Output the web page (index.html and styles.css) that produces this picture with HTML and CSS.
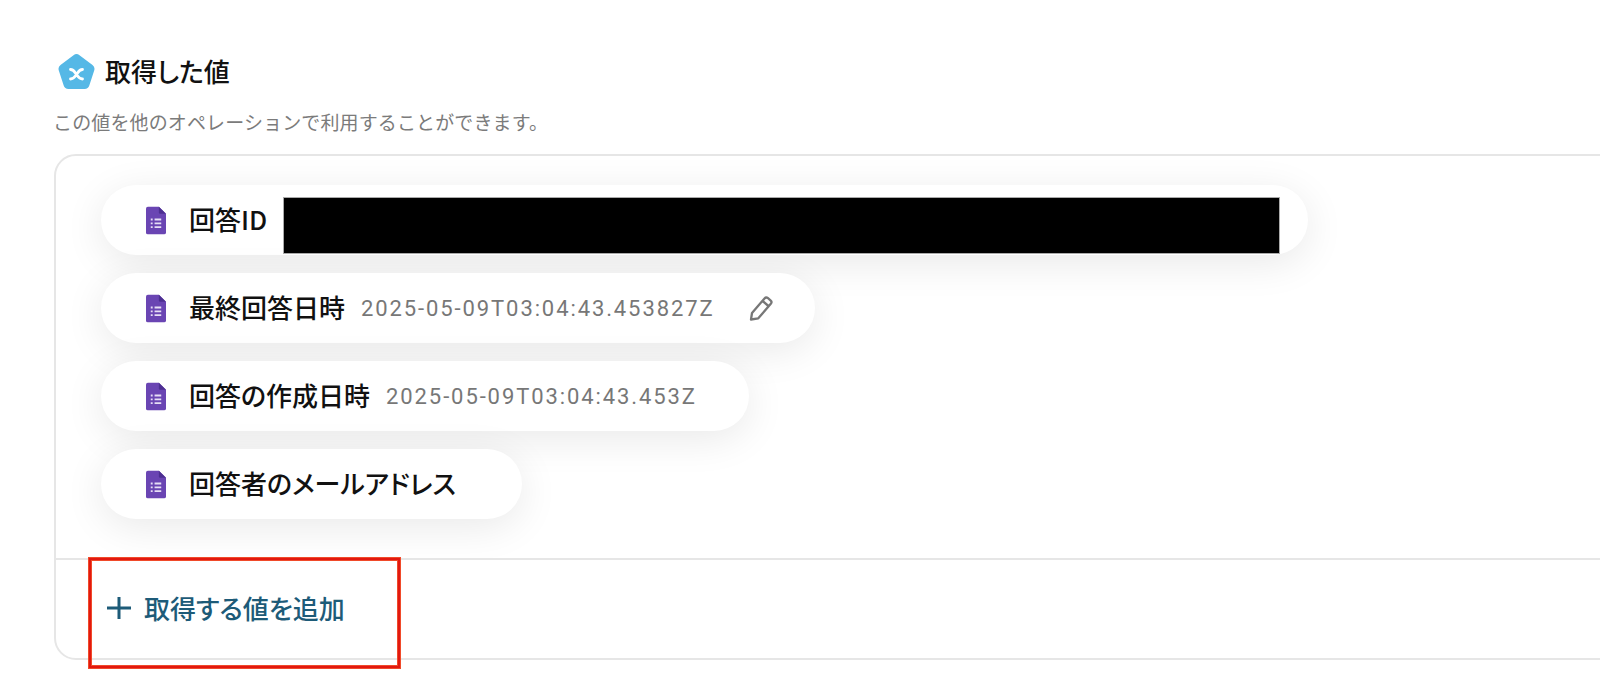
FILE: index.html
```html
<!DOCTYPE html>
<html lang="ja">
<head>
<meta charset="utf-8">
<title>取得した値</title>
<link rel="stylesheet" href="styles.css">
</head>
<body>
<svg class="defs" width="0" height="0" aria-hidden="true">
  <defs>
    <symbol id="form" viewBox="0 0 21 29">
      <path d="M2 0H13.5L21 7.5V27a2 2 0 0 1-2 2H2a2 2 0 0 1-2-2V2a2 2 0 0 1 2-2Z" fill="#6a45b3"/>
      <path d="M13.5 0L21 7.5H15a1.5 1.5 0 0 1-1.5-1.5Z" fill="#4d2f92"/>
      <path d="M5 12.5h2v2H5Zm4 0h7v2H9ZM5 16.5h2v2H5Zm4 0h7v2H9ZM5 20.5h2v2H5Zm4 0h7v2H9Z" fill="#e6def5"/>
    </symbol>
  </defs>
</svg>
<main class="page">
  <header class="head">
    <svg class="logo" viewBox="0 0 37 35" aria-hidden="true">
      <path d="M15.5 1.2a5 5 0 0 1 6 0l13 9.800a5 5 0 0 1 1.700 5.500l-4.900 15a5 5 0 0 1-4.700 3.500H10.400a5 5 0 0 1-4.700-3.500L.8 16.500A5 5 0 0 1 2.500 11Z" fill="#55b8e6"/>
      <path d="M12.500 15.500C16 15.500 17 18.500 18.500 20.500S21 25 24.500 25M24.500 15.500C21 15.500 20 18.500 18.500 20.500S16 25 12.500 25" fill="none" stroke="#fff" stroke-width="2.800" stroke-linecap="round"/>
    </svg>
    <h1 class="title">取得した値</h1>
  </header>
  <p class="sub">この値を他のオペレーションで利用することができます。</p>
  <section class="card">
    <div class="chips">
      <div class="chip chip-redacted">
        <svg class="doc"><use href="#form"/></svg>
        <span class="name">回答ID</span>
        <span class="redact"></span>
      </div>
      <div class="chip">
        <svg class="doc"><use href="#form"/></svg>
        <span class="name">最終回答日時</span>
        <span class="value">2025-05-09T03:04:43.453827Z</span>
        <svg class="pencil" viewBox="0 0 24 25" aria-hidden="true">
          <path d="M2 23.500 3 17 15.500 2.500a2.500 2.500 0 0 1 3.500-.3l2.500 2.100a2.500 2.500 0 0 1 .3 3.500L9.300 22.300ZM13.500 5l6.500 5.500" fill="none" stroke="#777" stroke-width="2.300" stroke-linejoin="round"/>
        </svg>
      </div>
      <div class="chip chip-date">
        <svg class="doc"><use href="#form"/></svg>
        <span class="name">回答の作成日時</span>
        <span class="value">2025-05-09T03:04:43.453Z</span>
      </div>
      <div class="chip chip-empty">
        <svg class="doc"><use href="#form"/></svg>
        <span class="name">回答者のメールアドレス</span>
      </div>
    </div>
    <div class="foot">
      <button class="add" type="button">
        <svg class="plus" viewBox="0 0 24 24" aria-hidden="true">
          <path d="M12 1v22M0 12h24" stroke="#1d5b78" stroke-width="3" fill="none"/>
        </svg>
        <span class="add-label">取得する値を追加</span>
      </button>
      <div class="mark"></div>
    </div>
  </section>
</main>
</body>
</html>
```

FILE: styles.css
```css
html, body {
  margin: 0;
  padding: 0;
  height: 100%;
  overflow: hidden;
  background: #fff;
}

body {
  font-family: "Noto Sans CJK JP", "Noto Sans", sans-serif;
  font-feature-settings: "palt";
  color: #111;
}

.defs {
  display: block;
  height: 0;
}

.page {
  padding: 54px 0 0 54px;
}

.head {
  display: flex;
  align-items: center;
  gap: 10px;
  height: 35px;
  padding-left: 4px;
}

.logo {
  width: 37px;
  height: 35px;
  flex: none;
}

.title {
  margin: -3px 0 0;
  font-size: 26px;
  font-weight: 500;
  line-height: 35px;
}

.sub {
  margin: 19px 0 0 -1px;
  height: 28px;
  font-size: 19px;
  font-feature-settings: normal;
  letter-spacing: 0.13px;
  line-height: 28px;
  color: #7b7b7b;
}

.card {
  margin: 18px -40px 0 0;
  border: 2px solid #e6e6e6;
  border-radius: 22px;
}

.chips {
  display: flex;
  flex-direction: column;
  align-items: flex-start;
  gap: 18px;
  padding: 29px 0 39px 45px;
}

.chip {
  display: flex;
  align-items: center;
  height: 70px;
  padding: 0 42px 0 45px;
  border-radius: 35px;
  background: #fff;
  box-shadow: 0 8px 40px rgba(0, 0, 0, 0.09);
}

.chip-redacted {
  padding-right: 29px;
}

.chip-date {
  padding-right: 52px;
}

.chip-empty {
  padding-right: 66px;
}

.doc {
  width: 20px;
  height: 29px;
  flex: none;
  margin-right: 23px;
}

.name {
  margin-top: -3px;
  font-size: 26px;
  font-weight: 500;
  line-height: 34px;
}

.value {
  margin-left: 16px;
  font-family: Roboto, "Noto Sans", sans-serif;
  font-size: 22px;
  letter-spacing: 1.9px;
  color: #777;
}

.redact {
  width: 995px;
  height: 55px;
  margin: 11px 0 0 17px;
  background: #000;
  outline: 1px solid #aaa;
}

.pencil {
  width: 24px;
  height: 25px;
  flex: none;
  margin-left: 34px;
}

.foot {
  position: relative;
  height: 98px;
  border-top: 2px solid #e6e6e6;
}

.add {
  display: flex;
  align-items: center;
  gap: 13px;
  height: 98px;
  padding: 0 0 0 51px;
  border: 0;
  background: none;
  font: inherit;
  font-size: 26px;
  font-weight: 500;
  color: #1d5b78;
}

.add-label {
  margin-top: -4px;
}

.plus {
  width: 24px;
  height: 24px;
  flex: none;
  margin-top: -2px;
}

.mark {
  position: absolute;
  left: 32px;
  top: -3px;
  box-sizing: border-box;
  width: 313px;
  height: 112px;
  border: 1px solid #f04a2a;
  box-shadow: inset 0 0 0 2px #e2180f, inset 0 0 0 3px #f04a2a;
}
```
